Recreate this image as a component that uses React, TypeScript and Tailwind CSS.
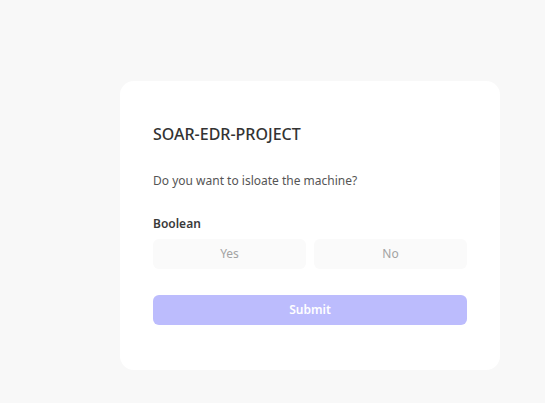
export default function App() {
  return (
    <div className="min-h-[403px] w-full bg-[#f8f8f8] pl-[120px] pt-[81px]" style={{ fontFamily: '"Noto Sans", "Open Sans", sans-serif' }}>
      <div className="w-[380px] rounded-[14px] bg-white px-[33px] pb-[45px] pt-[42px]">
        <h1 className="text-[16px] font-medium leading-[22px] text-[#333]">SOAR-EDR-PROJECT</h1>
        <p className="mt-[27px] text-[12px] leading-[18px] text-[#555]">Do you want to isloate the machine?</p>
        <div className="mt-[25px] text-[12px] font-semibold leading-[18px] text-[#3a3a3a]">Boolean</div>
        <div className="mt-[6px] grid grid-cols-2 gap-[8px]">
          <button className="h-[30px] rounded-[6px] bg-[#fafafa] text-[12px] text-[#a3a3a3]">Yes</button>
          <button className="h-[30px] rounded-[6px] bg-[#fafafa] text-[12px] text-[#a3a3a3]">No</button>
        </div>
        <button className="mt-[26px] h-[30px] w-full rounded-[6px] bg-[#bcbcfd] text-[12px] font-semibold text-white">Submit</button>
      </div>
    </div>
  );
}
